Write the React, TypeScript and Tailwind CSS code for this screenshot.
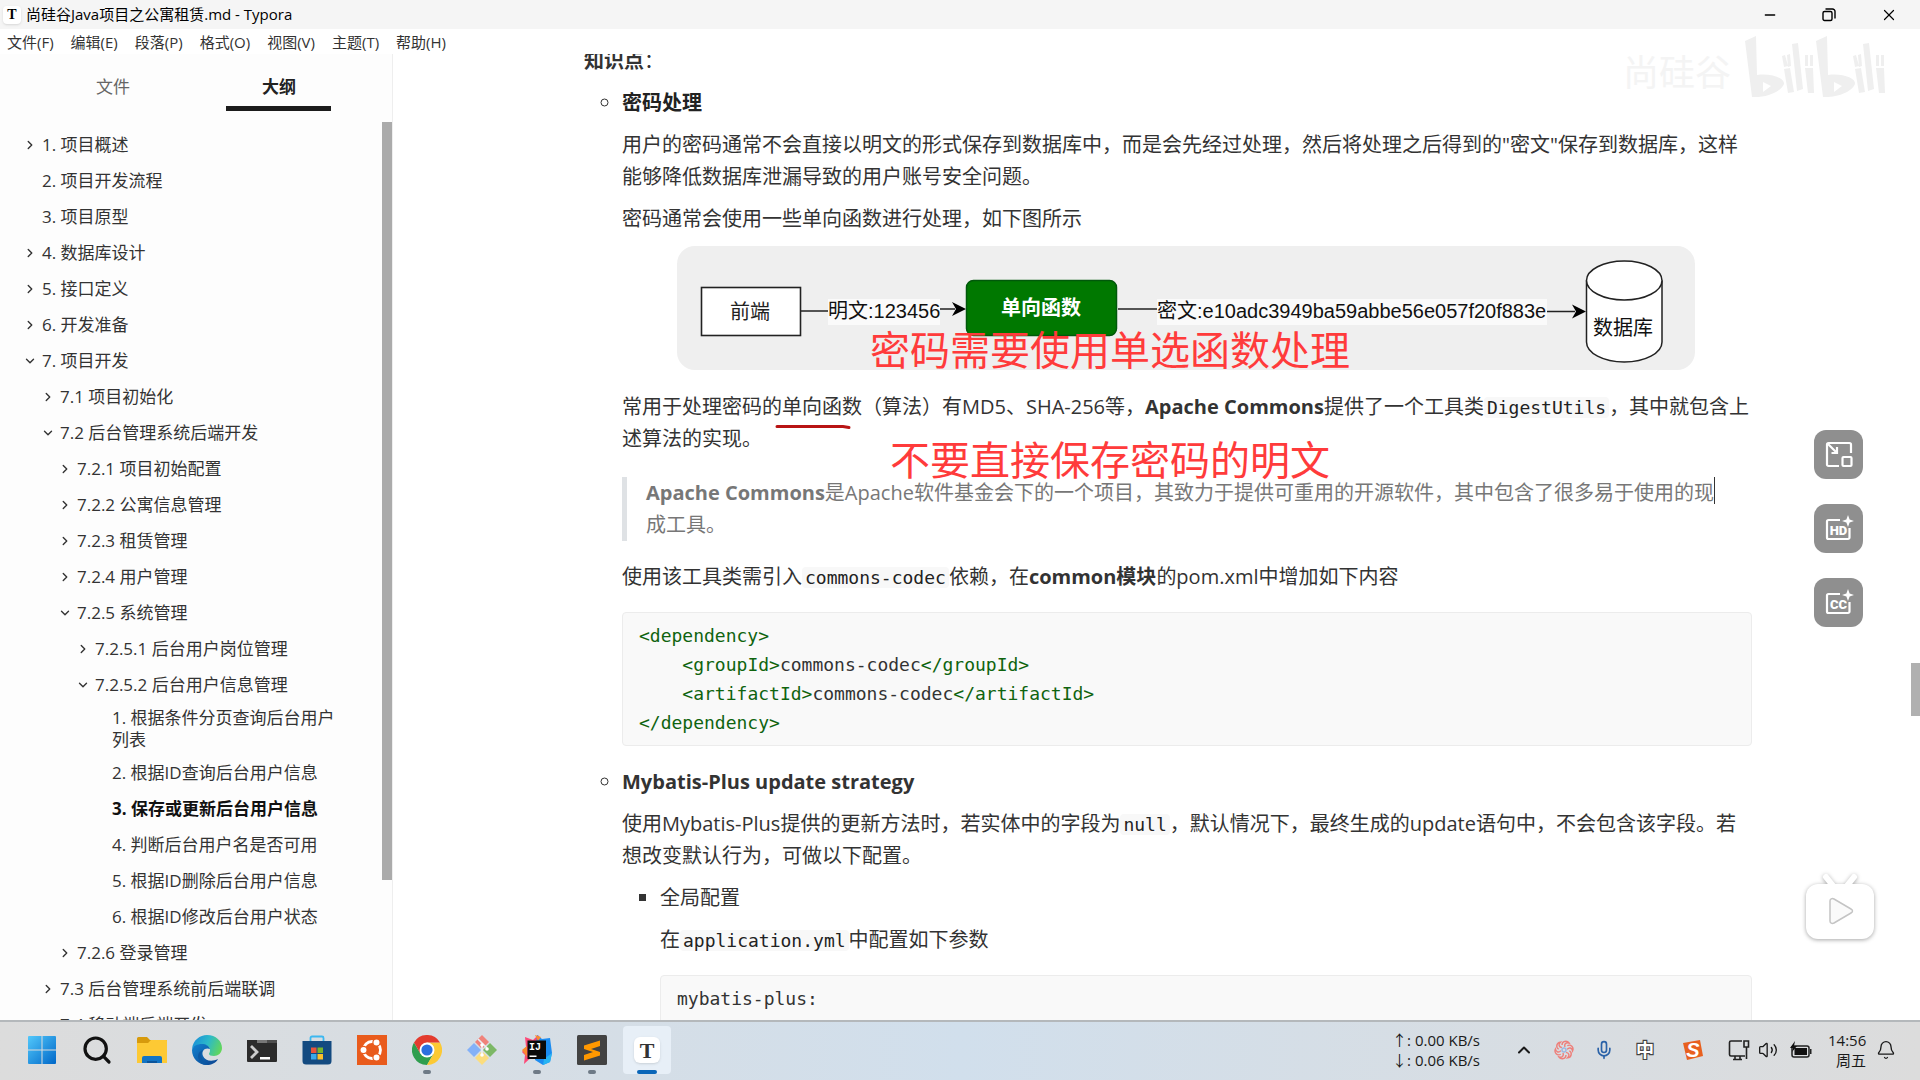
import React from 'react'
import { Search, Minus, X, ChevronRight, ChevronDown, ChevronUp, Mic, Volume2, Bell } from 'lucide-react'

interface OutlineItem {
  level: number
  label: string
  state?: 'open' | 'closed'
  active?: boolean
  wrap?: boolean
}

const menus = ['文件(F)', '编辑(E)', '段落(P)', '格式(O)', '视图(V)', '主题(T)', '帮助(H)']

const outline: OutlineItem[] = [
  { level: 0, label: '1. 项目概述', state: 'closed' },
  { level: 0, label: '2. 项目开发流程' },
  { level: 0, label: '3. 项目原型' },
  { level: 0, label: '4. 数据库设计', state: 'closed' },
  { level: 0, label: '5. 接口定义', state: 'closed' },
  { level: 0, label: '6. 开发准备', state: 'closed' },
  { level: 0, label: '7. 项目开发', state: 'open' },
  { level: 1, label: '7.1 项目初始化', state: 'closed' },
  { level: 1, label: '7.2 后台管理系统后端开发', state: 'open' },
  { level: 2, label: '7.2.1 项目初始配置', state: 'closed' },
  { level: 2, label: '7.2.2 公寓信息管理', state: 'closed' },
  { level: 2, label: '7.2.3 租赁管理', state: 'closed' },
  { level: 2, label: '7.2.4 用户管理', state: 'closed' },
  { level: 2, label: '7.2.5 系统管理', state: 'open' },
  { level: 3, label: '7.2.5.1 后台用户岗位管理', state: 'closed' },
  { level: 3, label: '7.2.5.2 后台用户信息管理', state: 'open' },
  { level: 4, label: '1. 根据条件分页查询后台用户列表', wrap: true },
  { level: 4, label: '2. 根据ID查询后台用户信息' },
  { level: 4, label: '3. 保存或更新后台用户信息', active: true },
  { level: 4, label: '4. 判断后台用户名是否可用' },
  { level: 4, label: '5. 根据ID删除后台用户信息' },
  { level: 4, label: '6. 根据ID修改后台用户状态' },
  { level: 2, label: '7.2.6 登录管理', state: 'closed' },
  { level: 1, label: '7.3 后台管理系统前后端联调', state: 'closed' },
  { level: 1, label: '7.4 移动端后端开发' }
]

const indents = ['pl-[23px]', 'pl-[41px]', 'pl-[58px]', 'pl-[76px]', 'pl-[93px]']

const TitleBar = () => (
  <header className="flex h-[29px] shrink-0 items-center justify-between bg-[#f5f5f5] pl-[3px] text-[15px] text-black">
    <div className="flex items-center gap-[5px]">
      <span className="flex h-[18px] w-[18px] items-center justify-center rounded bg-white font-['Liberation_Serif',serif] text-sm font-bold shadow-sm">T</span>
      <h1>尚硅谷Java项目之公寓租赁.md - Typora</h1>
    </div>
    <div className="flex h-full">
      <button aria-label="最小化" className="flex w-[59px] items-center justify-center"><Minus className="h-4 w-4" strokeWidth={2} /></button>
      <button aria-label="还原" className="flex w-[59px] items-center justify-center">
        <svg viewBox="0 0 14 14" className="h-3.5 w-3.5" fill="none" stroke="currentColor" strokeWidth="1.4">
          <rect x="1" y="3.5" width="9" height="9" rx="1.5" />
          <path d="M3.5 1h7A2.5 2.5 0 0 1 13 3.5v7" />
        </svg>
      </button>
      <button aria-label="关闭" className="flex w-[62px] items-center justify-center"><X className="h-[18px] w-[18px]" strokeWidth={1.6} /></button>
    </div>
  </header>
)

const Sidebar = () => (
  <aside className="relative flex w-[393px] shrink-0 flex-col border-r border-[#eeeeee] bg-[#fdfdfd] text-[17px] text-[#333]">
    <div className="flex h-[57px] shrink-0 px-[30px]">
      <button className="flex w-[166px] items-center justify-center pt-2 text-[#666]">文件</button>
      <button className="relative flex w-[166px] items-center justify-center pt-2 font-bold text-[#222]">
        大纲
        <span className="absolute bottom-0 left-[30px] h-[5px] w-[105px] bg-[#1c1c1c]" />
      </button>
    </div>
    <nav className="min-h-0 flex-1 overflow-hidden pt-4 pr-[46px]">
      {outline.map(item => (
        <a
          key={item.label}
          href="#"
          className={`flex leading-[22px] ${indents[item.level]} ${item.wrap ? 'py-1' : 'py-[7px]'} ${item.active ? 'font-bold text-[#111]' : ''}`}
        >
          <span className="flex h-[22px] w-[19px] shrink-0 items-center">
            {item.state === 'closed' && <ChevronRight className="h-3.5 w-3.5" strokeWidth={2.4} />}
            {item.state === 'open' && <ChevronDown className="h-3.5 w-3.5" strokeWidth={2.4} />}
          </span>
          {item.label}
        </a>
      ))}
    </nav>
    <span className="absolute top-[68px] right-0 h-[758px] w-2.5 bg-[#ababab]" />
  </aside>
)

const Diagram = () => (
  <svg viewBox="0 0 1018 124" className="mt-[11px] mb-[21px] ml-[55px] block w-[1018px] max-w-full font-['Liberation_Sans','Noto_Sans_CJK_SC',sans-serif] text-[20px]">
    <rect width="1018" height="124" rx="18" fill="#efefef" />
    <rect x="24.5" y="41.5" width="99" height="48" fill="#fff" stroke="#222" strokeWidth="1.6" />
    <text x="73" y="73" textAnchor="middle" fill="#222">前端</text>
    <path d="M124 65H153M262 63H278M441 63H480M869 65.5H898" stroke="#222" strokeWidth="1.6" />
    <path d="M289 63l-14-7 4 7-4 7zM909 65.5l-14-7 4 7-4 7z" fill="#000" />
    <rect x="151" y="53" width="112" height="26" fill="#fafafa" />
    <text x="151" y="72" fill="#111">明文:123456</text>
    <rect x="289.5" y="34.5" width="150" height="55" rx="7" fill="#007800" stroke="#00580a" strokeWidth="1.5" />
    <text x="364" y="69" textAnchor="middle" fill="#fff" className="font-bold">单向函数</text>
    <rect x="480" y="53" width="390" height="26" fill="#fafafa" />
    <text x="480" y="72" fill="#111">密文:e10adc3949ba59abbe56e057f20f883e</text>
    <path d="M909.5 34.5V96a37.7 20 0 0 0 75.5 0V34.5" fill="#fff" stroke="#222" strokeWidth="1.5" />
    <ellipse cx="947.25" cy="34.5" rx="37.75" ry="19.5" fill="#fff" stroke="#222" strokeWidth="1.5" />
    <text x="946" y="89" textAnchor="middle" fill="#111">数据库</text>
  </svg>
)

const Code = ({ children }: { children: React.ReactNode }) => (
  <code className="rounded-sm bg-[#f8f8f8] px-[3px] font-['DejaVu_Sans_Mono',monospace] text-[18px] leading-5 text-[#222]">{children}</code>
)

const Tag = ({ children }: { children: React.ReactNode }) => <span className="text-[#0f640f]">{children}</span>

const CodeBlock = ({ children }: { children: React.ReactNode }) => (
  <pre className="mt-[19px] rounded border border-[#ececec] bg-[#f9f9f9] px-4 py-2 font-['DejaVu_Sans_Mono',monospace] text-[18px] leading-[29px] text-[#333]">{children}</pre>
)

const Article = () => (
  <article className="relative -mt-[9px] pr-[159px] pl-[191px] text-[20px] leading-8 text-[#333]">
    <p><strong>知识点</strong>：</p>
    <ul className="mt-2.5 list-[circle] pl-[38px]">
      <li>
        <strong className="text-[#222]">密码处理</strong>
        <p className="mt-2.5">用户的密码通常不会直接以明文的形式保存到数据库中，而是会先经过处理，然后将处理之后得到的"密文"保存到数据库，这样能够降低数据库泄漏导致的用户账号安全问题。</p>
        <p className="mt-2.5">密码通常会使用一些单向函数进行处理，如下图所示</p>
        <Diagram />
        <p>
          常用于处理密码的单向函数（算法）有MD5、SHA-256等，<strong>Apache Commons</strong>提供了一个工具类<Code>DigestUtils</Code>，其中就包含上述算法的实现。
        </p>
        <blockquote className="mt-[22px] border-l-[5px] border-[#dfe2e5] pr-6 pl-[19px] text-[#777]">
          <strong>Apache Commons</strong>是Apache软件基金会下的一个项目，其致力于提供可重用的开源软件，其中包含了很多易于使用的现成工具。
        </blockquote>
        <p className="mt-5">
          使用该工具类需引入<Code>commons-codec</Code>依赖，在<strong>common模块</strong>的pom.xml中增加如下内容
        </p>
        <CodeBlock>
          <Tag>{'<dependency>'}</Tag>{'\n    '}
          <Tag>{'<groupId>'}</Tag>commons-codec<Tag>{'</groupId>'}</Tag>{'\n    '}
          <Tag>{'<artifactId>'}</Tag>commons-codec<Tag>{'</artifactId>'}</Tag>{'\n'}
          <Tag>{'</dependency>'}</Tag>
        </CodeBlock>
      </li>
      <li className="mt-5">
        <strong>Mybatis-Plus update strategy</strong>
        <p className="mt-2.5">
          使用Mybatis-Plus提供的更新方法时，若实体中的字段为<Code>null</Code>，默认情况下，最终生成的update语句中，不会包含该字段。若想改变默认行为，可做以下配置。
        </p>
        <ul className="mt-2.5 list-[square] pl-[38px]">
          <li>
            全局配置
            <p className="mt-2.5">在<Code>application.yml</Code>中配置如下参数</p>
            <CodeBlock>{'mybatis-plus:\n  global-config:\n    db-config:'}</CodeBlock>
          </li>
        </ul>
      </li>
    </ul>

    {/* Annotations drawn over the document */}
    <svg viewBox="0 0 76 6" className="absolute top-[379px] left-[382px] h-1.5 w-[76px]" fill="none" stroke="#b81414" strokeWidth="3" strokeLinecap="round">
      <path d="M2 2.5H68l6 1" />
    </svg>
    <p className="absolute top-[281px] left-[477px] text-[40px] leading-12 whitespace-nowrap text-[#ff3b3b]">密码需要使用单选函数处理</p>
    <p className="absolute top-[391px] left-[497px] text-[40px] leading-12 whitespace-nowrap text-[#ff3b3b]">不要直接保存密码的明文</p>
    <span className="absolute top-[432px] left-[1321px] h-[27px] w-px bg-[#333]" />
  </article>
)

const Watermark = () => (
  <div className="absolute -top-[18px] right-[35px] flex items-center gap-3.5">
    <span className="pt-3 text-[36px] leading-none text-[#f4f4f4]">尚硅谷</span>
    <svg viewBox="0 0 140 62" className="h-[62px] w-[140px]" fill="#efefef">
      <g id="bili">
        <path fillRule="evenodd" d="M0 5L11 0L12 39C26 37 40 42 39 48C36 56 20 62 7 61ZM18 46V56L26 50Z" />
        <path d="M37 20l3-1 3 11-4 1zM42 19l3-1 1 12-3 1zM39 33l6-1 4 24-6 1zM47 8l6-1 5 46-6 2zM60 19h3v11h-3zM65 19h3v11h-3zM60 32h8l1 25h-6z" />
      </g>
      <use href="#bili" x="71" />
    </svg>
  </div>
)

const spark = 'M25 0l1.6 4.4L31 6l-4.4 1.6L25 12l-1.6-4.4L19 6l4.4-1.600z'

const VideoTools = () => (
  <div className="absolute top-[376px] right-[57px] flex flex-col gap-[25px]">
    <button aria-label="画中画" className="flex h-[49px] w-[49px] items-center justify-center rounded-xl bg-[#8f8f8f]">
      <svg viewBox="0 0 28 28" className="h-7 w-7" fill="none" stroke="#fff" strokeWidth="2.2">
        <path d="M14 25H3.5A1.5 1.5 0 0 1 2 23.5V3.5A1.5 1.5 0 0 1 3.5 2H24.5A1.5 1.5 0 0 1 26 3.5V12" />
        <path d="M3 3l8 8M12 6v6H6.500" />
        <rect x="17.5" y="16" width="9" height="9" rx="1" />
      </svg>
    </button>
    {['HD', 'CC'].map(label => (
      <button key={label} aria-label={label} className="flex h-[49px] w-[49px] items-center justify-center rounded-xl bg-[#8f8f8f]">
        <svg viewBox="0 0 31 28" className="h-7 w-[31px]">
          <path d="M17 5H5.5A1.500 1.500 0 0 0 4 6.500V22.500A1.500 1.500 0 0 0 5.500 24H25A1.500 1.500 0 0 0 26.500 22.500V13" fill="none" stroke="#fff" strokeWidth="2.2" />
          <path d={spark} fill="#fff" />
          <text x="15.5" y="19.5" textAnchor="middle" fill="#fff" className="font-['Roboto',sans-serif] text-[13px] font-black">{label}</text>
        </svg>
      </button>
    ))}
  </div>
)

const PlayBadge = () => (
  <button aria-label="播放" className="absolute right-10 bottom-[74px]">
    <svg viewBox="0 0 80 74" className="h-[74px] w-20 drop-shadow-[0_1px_2px_rgba(0,0,0,0.35)]">
      <path d="M26 5l8 10M54 5l-8 10" stroke="#fff" strokeWidth="6" strokeLinecap="round" />
      <rect x="6" y="12" width="68" height="55" rx="12" fill="#fff" />
      <path d="M30 29c0-2 2-3 4-2l17 10c2 1 2 3 0 4L34 51c-2 1-4 0-4-2z" fill="#fafafa" stroke="#c4c4c4" strokeWidth="1.5" />
    </svg>
  </button>
)

const apps: { name: string; running?: boolean; active?: boolean; icon: React.ReactNode }[] = [
  {
    name: '开始',
    icon: (
      <svg viewBox="0 0 30 30" className="h-[30px] w-[30px]">
        <defs>
          <linearGradient id="win" x1="0" y1="0" x2="1" y2="1"><stop stopColor="#52c8fb" /><stop offset="1" stopColor="#0067c8" /></linearGradient>
        </defs>
        <path fill="url(#win)" d="M2 1h12.500v13.500H1V2a1 1 0 0 1 1-1zM15.500 1H28a1 1 0 0 1 1 1v12.500H15.500zM1 15.500h13.500V29H2a1 1 0 0 1-1-1zM15.500 15.500H29V28a1 1 0 0 1-1 1H15.500z" />
      </svg>
    )
  },
  {
    name: '搜索',
    icon: <Search className="h-8 w-8 text-[#111]" strokeWidth={2.4} />
  },
  {
    name: '文件资源管理器',
    icon: (
      <svg viewBox="0 0 30 30" className="h-[30px] w-[30px]">
        <path d="M0 3.5A1.5 1.5 0 0 1 1.5 2H10l3 3H29a1 1 0 0 1 1 1V12H0z" fill="#d79a0c" />
        <path d="M0 8h11l3-3h15a1 1 0 0 1 1 1v22H0z" fill="#fdc934" />
        <path d="M5 28v-5a2 2 0 0 1 2-2h16a2 2 0 0 1 2 2v5z" fill="#1274c4" />
        <path d="M10 28v-2h10v2z" fill="#0b549b" />
      </svg>
    )
  },
  {
    name: 'Edge',
    icon: (
      <svg viewBox="0 0 30 30" className="h-[30px] w-[30px]">
        <defs>
          <linearGradient id="edgeTop" x1="0" y1="0.3" x2="1" y2="0.6"><stop stopColor="#1a8fd8" /><stop offset="0.5" stopColor="#2cb9c9" /><stop offset="1" stopColor="#63d75a" /></linearGradient>
          <linearGradient id="edgeLow" x1="0" y1="0" x2="1" y2="1"><stop stopColor="#1282d0" /><stop offset="1" stopColor="#0b438f" /></linearGradient>
        </defs>
        <path d="M0 14C1 5 8 0 15 0c9 0 15 6 15 13 0 5-4 8-8 8-3 0-5-1-5-2s1-1 1-4c0-3-3-5-7-5-5 0-9 2-11 4z" fill="url(#edgeTop)" />
        <path d="M0 15c1-4 5-6 10-6 4 0 7 2 8 5-5-2-9 2-7 7 2 5 9 6 15 3-2 4-7 6-11 6C6 30 0 23 0 15z" fill="url(#edgeLow)" />
        <path d="M11 15c-3 4-2 11 5 15h-1c-6 0-9-5-9-9 0-3 2-5 5-6z" fill="#0c59a4" />
      </svg>
    )
  },
  {
    name: '终端',
    icon: (
      <svg viewBox="0 0 30 30" className="h-[30px] w-[30px]">
        <path d="M0 5h30v21a1 1 0 0 1-1 1H1a1 1 0 0 1-1-1z" fill="#2b2b2b" />
        <path d="M10 5h10v3H10z" fill="#777" /><path d="M20 5h10v3H20z" fill="#4e4e4e" />
        <path d="M4 11l6 6-6 6" fill="none" stroke="#ccc" strokeWidth="2.8" />
        <path d="M13 22h10v2.500H13z" fill="#fff" />
      </svg>
    )
  },
  {
    name: 'Store',
    icon: (
      <svg viewBox="0 0 30 30" className="h-[30px] w-[30px]">
        <path d="M8.5 7V3A1.5 1.5 0 0 1 10 1.500h10A1.5 1.5 0 0 1 21.500 3v4" fill="none" stroke="#3cb8f0" strokeWidth="1.8" />
        <path d="M.5 6h29v20a3.5 3.5 0 0 1-3.500 3.500H4A3.5 3.5 0 0 1 .5 26z" fill="#134a80" />
        <path d="M9 12.500h5.500V18H9z" fill="#e8543a" /><path d="M15.500 12.500H21V18h-5.500z" fill="#79b52b" />
        <path d="M9 19h5.500v5.500H9z" fill="#39a8ea" /><path d="M15.500 19H21v5.500h-5.500z" fill="#fbc02a" />
      </svg>
    )
  },
  {
    name: 'Ubuntu',
    icon: (
      <svg viewBox="0 0 30 30" className="h-[30px] w-[30px]">
        <rect width="30" height="30" fill="#e95b1c" />
        <circle cx="15" cy="15" r="8.5" fill="none" stroke="#fff" strokeWidth="2.8" />
        <g fill="#fff" stroke="#e95b1c" strokeWidth="1.2">
          <circle cx="6.5" cy="15" r="3.6" /><circle cx="19.5" cy="7.5" r="3.6" /><circle cx="19.5" cy="22.5" r="3.6" />
        </g>
      </svg>
    )
  },
  {
    name: 'Chrome',
    running: true,
    icon: (
      <svg viewBox="0 0 30 30" className="h-[30px] w-[30px]">
        <path d="M2 7.500A15 15 0 0 0 15 30l6.500-11.200L15 15l-6.500 3.700z" fill="#2f9e4f" />
        <path d="M28 7.500A15 15 0 0 1 15 30l6.500-11.200L21.500 11 15 7.500z" fill="#fcc934" />
        <path d="M2 7.500L8.500 18.700 10 11l5-3.500h13A15 15 0 0 0 2 7.500z" fill="#e33b2e" />
        <circle cx="15" cy="15" r="7.5" fill="#fff" /><circle cx="15" cy="15" r="5.6" fill="#2b6fe0" />
      </svg>
    )
  },
  {
    name: 'Git',
    icon: (
      <svg viewBox="0 0 30 30" className="h-[30px] w-[30px]">
        <path d="M15 0l7 7-7 7-7-7z" fill="#f0837b" /><path d="M7 8l7 7-7 7-7-7z" fill="#84b1f8" />
        <path d="M23 8l7 7-7 7-7-7z" fill="#7cb866" /><path d="M15 16l7 7-7 7-7-7z" fill="#fbdd7e" />
        <path d="M11 4l9 9M15 9v12" stroke="#e9eff5" strokeWidth="1.6" />
        <circle cx="15" cy="10" r="1.8" fill="#fff" /><circle cx="20" cy="14" r="1.8" fill="#fff" /><circle cx="15" cy="20" r="1.8" fill="#fff" />
      </svg>
    )
  },
  {
    name: 'IntelliJ IDEA',
    running: true,
    icon: (
      <svg viewBox="0 0 30 30" className="h-[30px] w-[30px]">
        <path d="M3 2l8 3 5-5 5 8-7 10L2 29l1-9-3-3 4-5z" fill="#fc4a78" />
        <path d="M0 15l5-4v11z" fill="#fb8a2e" /><path d="M15 0l5 4 8-1 2 15-2 9-7 3-8-5z" fill="#1c8cf0" />
        <path d="M13 0l6 2-3 4z" fill="#fb8a2e" /><path d="M22 24l8-6-2 9-7 3z" fill="#27b4f3" />
        <rect x="5.5" y="5.5" width="18.5" height="18.5" fill="#0a0a0a" />
        <text x="7" y="15" fill="#fff" className="font-['Liberation_Mono',monospace] text-[10px] font-bold">IJ</text>
        <path d="M7.500 20.500h7v1.500h-7z" fill="#fff" />
      </svg>
    )
  },
  {
    name: 'Sublime Text',
    running: true,
    icon: (
      <svg viewBox="0 0 30 30" className="h-[30px] w-[30px]">
        <rect width="30" height="30" rx="1.5" fill="#424242" />
        <path d="M7 10.500L23 5.500V11l-9 3 9 3v3.500L7 25.500V20l9-3-9-3z" fill="#ff9800" />
      </svg>
    )
  },
  {
    name: 'Typora',
    active: true,
    icon: <span className="flex h-[26px] w-[26px] items-center justify-center rounded-md bg-white font-['Liberation_Serif',serif] text-[22px] font-bold text-[#333] shadow-sm">T</span>
  }
]

const Taskbar = () => (
  <footer className="flex h-[60px] shrink-0 items-center justify-between border-t-2 border-[#b4b8bb] bg-linear-to-r from-[#dcdcdc] via-[#d1dfec] to-[#dcdcdc] pr-6 pb-0.5 pl-[18px] text-[#1a1a1a]">
    <div className="flex gap-[7px]">
      {apps.map(app => (
        <button
          key={app.name}
          aria-label={app.name}
          className={`relative flex h-12 w-12 items-center justify-center rounded ${app.active ? 'bg-[#e7eff7]' : ''}`}
        >
          {app.icon}
          {app.running && <span className="absolute bottom-0 h-1 w-2 rounded-full bg-[#6e7a86]" />}
          {app.active && <span className="absolute bottom-0 h-1 w-5 rounded-full bg-[#0a66b8]" />}
        </button>
      ))}
    </div>
    <div className="flex items-center">
      <div className="mr-[34px] text-[15px] leading-5">
        <p>↑: 0.00 KB/s</p>
        <p>↓: 0.06 KB/s</p>
      </div>
      <div className="mr-[26px] flex items-center gap-5">
        <ChevronUp className="h-5 w-5" strokeWidth={2.4} />
        <svg viewBox="0 0 20 20" className="h-5 w-5" fill="none" stroke="#ee7f7a" strokeWidth="1.4">
          {[0, 60, 120, 180, 240, 300].map(a => (
            <path key={a} d="M8 5C8 1 13 0 15 3c-3-1-5 1-4 4" transform={`rotate(${a} 10 10)`} />
          ))}
          <circle cx="10" cy="10" r="2" stroke="#9db8e0" />
        </svg>
        <Mic className="h-[22px] w-5 text-[#2a62a8]" strokeWidth={2} />
        <svg viewBox="0 0 22 22" className="h-[22px] w-[22px]">
          <text x="11" y="18" textAnchor="middle" fill="#fff" stroke="#444" strokeWidth="2.4" paintOrder="stroke" className="text-[18px] font-bold">中</text>
        </svg>
      </div>
      <div className="flex items-center gap-2">
        <svg viewBox="0 0 22 22" className="mr-4 h-[22px] w-[22px]">
          <path d="M1 4L18 1l3 16-16 4z" fill="#e8601f" />
          <text x="11" y="18" textAnchor="middle" fill="#fff" className="font-['Liberation_Sans',sans-serif] text-[20px] font-bold italic">S</text>
        </svg>
        <svg viewBox="0 0 22 22" className="h-[22px] w-[22px]" fill="none" stroke="#222" strokeWidth="1.6">
          <path d="M14 2H3A1.5 1.5 0 0 0 1.500 3.500v12A1.5 1.5 0 0 0 3 17h14M7 17v3.500M12 17v3.500M5 20.500h9M16 2h4.500v6H16zM18.500 8v12" />
        </svg>
        <Volume2 className="h-5 w-5" strokeWidth={1.6} />
        <svg viewBox="0 0 22 18" className="ml-1 h-[18px] w-[22px]">
          <rect x="2" y="5" width="17" height="11" rx="2" fill="none" stroke="#222" strokeWidth="1.5" />
          <rect x="4.5" y="7" width="12.5" height="7" fill="#111" /><path d="M20 8h1.500v5H20z" fill="#222" />
          <path d="M5 0L0 7h3l-1 4 5-6H4z" fill="#111" />
        </svg>
        <div className="ml-2 w-[38px] text-right text-[15px] leading-5">
          <p>14:56</p>
          <p>周五</p>
        </div>
        <Bell className="ml-0.5 h-5 w-5" strokeWidth={1.6} />
      </div>
    </div>
  </footer>
)

export default function App() {
  return (
    <div className="flex h-screen flex-col overflow-hidden bg-white font-['Open_Sans','Noto_Sans_CJK_SC',sans-serif]">
      <TitleBar />
      <nav className="flex h-[25px] shrink-0 items-center gap-[17px] px-[7px] pt-0.5 text-[15px] text-[#333]">
        {menus.map(menu => <button key={menu}>{menu}</button>)}
      </nav>
      <div className="relative flex min-h-0 flex-1">
        <Sidebar />
        <main className="min-w-0 flex-1 overflow-hidden pr-[9px]">
          <Article />
        </main>
        <Watermark />
        <VideoTools />
        <PlayBadge />
        <span className="absolute top-[609px] right-0 h-[53px] w-[9px] bg-[#b0b0b0]" />
      </div>
      <Taskbar />
    </div>
  )
}
